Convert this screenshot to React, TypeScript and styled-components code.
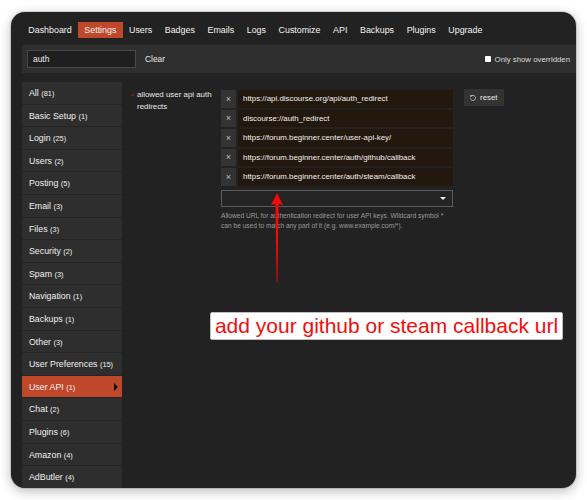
import React from "react";
import styled, { createGlobalStyle } from "styled-components";

const ORANGE = "#c0482a";

const GlobalStyle = createGlobalStyle`
  html, body {
    margin: 0;
    background: #ffffff;
  }
  body {
    font-family: "Liberation Sans", Arial, sans-serif;
  }
`;

const navItems = [
  "Dashboard",
  "Settings",
  "Users",
  "Badges",
  "Emails",
  "Logs",
  "Customize",
  "API",
  "Backups",
  "Plugins",
  "Upgrade",
];

const categories: [string, number][] = [
  ["All", 81],
  ["Basic Setup", 1],
  ["Login", 25],
  ["Users", 2],
  ["Posting", 5],
  ["Email", 3],
  ["Files", 3],
  ["Security", 2],
  ["Spam", 3],
  ["Navigation", 1],
  ["Backups", 1],
  ["Other", 3],
  ["User Preferences", 15],
  ["User API", 1],
  ["Chat", 2],
  ["Plugins", 6],
  ["Amazon", 4],
  ["AdButler", 4],
];

const redirects = [
  "https://api.discourse.org/api/auth_redirect",
  "discourse://auth_redirect",
  "https://forum.beginner.center/user-api-key/",
  "https://forum.beginner.center/auth/github/callback",
  "https://forum.beginner.center/auth/steam/callback",
];

export default function App() {
  return (
    <>
      <GlobalStyle />
      <Page>
        <Window>
          <Nav>
            {navItems.map((item) => (
              <NavItem key={item} $active={item === "Settings"}>
                {item}
              </NavItem>
            ))}
          </Nav>
          <Body>
            <SearchRow>
              <SearchInput defaultValue="auth" />
              <ClearLink>Clear</ClearLink>
              <Spacer />
              <OverriddenToggle>
                <CheckBox />
                Only show overridden
              </OverriddenToggle>
            </SearchRow>
            <Columns>
              <Sidebar>
                {categories.map(([name, count]) => (
                  <Category key={name} $active={name === "User API"}>
                    {name} <Count>({count})</Count>
                    {name === "User API" && <Caret />}
                  </Category>
                ))}
              </Sidebar>
              <Main>
                <SettingRow>
                  <SettingName>
                    <OverriddenMark />
                    allowed user api auth redirects
                  </SettingName>
                  <SettingValue>
                    <ValueList>
                      {redirects.map((url) => (
                        <ValueRow key={url}>
                          <RemoveButton>×</RemoveButton>
                          <ValueInput>{url}</ValueInput>
                        </ValueRow>
                      ))}
                    </ValueList>
                    <AddSelect>
                      <SelectCaret />
                    </AddSelect>
                    <Description>
                      Allowed URL for authentication redirect for user API keys.
                      Wildcard symbol * can be used to match any part of it
                      (e.g. www.example.com/*).
                    </Description>
                  </SettingValue>
                  <ResetButton>
                    <ResetIcon viewBox="0 0 16 16">
                      <path
                        d="M4.2 4.6A5 5 0 1 1 3 8.6"
                        fill="none"
                        stroke="#cfcfcf"
                        strokeWidth="1.6"
                      />
                      <path d="M2 2.4 L6.6 2.6 L3.3 6.4 Z" fill="#cfcfcf" />
                    </ResetIcon>
                    reset
                  </ResetButton>
                </SettingRow>
              </Main>
            </Columns>
          </Body>
        </Window>
        <Arrow viewBox="0 0 14 92">
          <polygon points="7,0 13,12 8.6,11 7.4,90 6.6,90 5.4,11 1,12" fill="#f40808" />
        </Arrow>
        <Callout>add your github or steam callback url</Callout>
      </Page>
    </>
  );
}

const Page = styled.div`
  position: relative;
  width: 587px;
  height: 500px;
  padding: 12px 11px;
  box-sizing: border-box;
`;

const Window = styled.div`
  width: 565px;
  height: 476px;
  background: #222222;
  border-radius: 14px;
  overflow: hidden;
  box-shadow: 0 0 0 1px rgba(0, 0, 0, 0.12), 0 3px 12px rgba(0, 0, 0, 0.28);
  color: #e6e6e6;
`;

const Nav = styled.nav`
  display: flex;
  height: 33px;
  box-sizing: border-box;
  padding: 10px 11px 0;
`;

const NavItem = styled.div<{ $active?: boolean }>`
  height: 16px;
  line-height: 16px;
  padding: 0 6.3px;
  font-size: 8.9px;
  color: #f2f2f2;
  background: ${(p) => (p.$active ? ORANGE : "transparent")};
`;

const Body = styled.div`
  padding-left: 11px;
`;

const SearchRow = styled.div`
  display: flex;
  align-items: center;
  height: 28px;
  padding: 0 5px;
  background: #2f2f2f;
  font-size: 8.4px;
`;

const SearchInput = styled.input`
  width: 109px;
  height: 18px;
  box-sizing: border-box;
  padding: 0 5px;
  background: #1f1f1f;
  border: 1px solid #4a4a4a;
  color: #eeeeee;
  font-family: inherit;
  font-size: 8.4px;
  outline: none;
`;

const ClearLink = styled.span`
  margin-left: 9px;
  color: #e6e6e6;
`;

const Spacer = styled.div`
  flex: 1;
`;

const OverriddenToggle = styled.label`
  display: flex;
  align-items: center;
  gap: 4px;
  color: #dddddd;
  font-size: 7.8px;
  margin-right: 1px;
`;

const CheckBox = styled.span`
  width: 6px;
  height: 6px;
  background: #ffffff;
  border-radius: 1px;
`;

const Columns = styled.div`
  display: flex;
  margin-top: 9px;
`;

const Sidebar = styled.ul`
  width: 100px;
  margin: 0;
  padding: 0;
  list-style: none;
  background: #2c2c2c;
`;

const Category = styled.li<{ $active?: boolean }>`
  position: relative;
  height: 21.6px;
  line-height: 22.6px;
  padding-left: 7px;
  font-size: 8.8px;
  color: #f0f0f0;
  background: ${(p) => (p.$active ? ORANGE : "#2e2e2e")};
  border-bottom: 1px solid #242424;
`;

const Count = styled.span`
  font-size: 7.4px;
`;

const Caret = styled.span`
  position: absolute;
  right: 4px;
  top: 7px;
  width: 0;
  height: 0;
  border-top: 4px solid transparent;
  border-bottom: 4px solid transparent;
  border-left: 4px solid #111111;
`;

const Main = styled.div`
  flex: 1;
  padding: 8px 0 0 15px;
`;

const SettingRow = styled.div`
  display: grid;
  grid-template-columns: 78px 232px auto;
  column-gap: 6px;
  align-items: start;
  justify-items: start;
`;

const SettingName = styled.div`
  position: relative;
  font-size: 7.9px;
  line-height: 12px;
  color: #e8e8e8;
  margin-top: -1px;
`;

const OverriddenMark = styled.span`
  position: absolute;
  left: -6px;
  top: 5px;
  width: 3px;
  height: 2px;
  background: #6e1d16;
`;

const SettingValue = styled.div`
  display: flex;
  flex-direction: column;
  width: 232px;
`;

const ValueList = styled.div`
  display: flex;
  flex-direction: column;
  gap: 2px;
`;

const ValueRow = styled.div`
  display: flex;
  gap: 2px;
  height: 17.5px;
`;

const RemoveButton = styled.div`
  width: 15px;
  display: flex;
  align-items: center;
  justify-content: center;
  background: #333333;
  color: #bbbbbb;
  font-size: 9px;
`;

const ValueInput = styled.div`
  flex: 1;
  display: flex;
  align-items: center;
  padding-left: 5px;
  background: #23180e;
  color: #eeeeee;
  font-size: 7.9px;
  white-space: nowrap;
`;

const AddSelect = styled.div`
  position: relative;
  height: 17px;
  margin-top: 4.5px;
  box-sizing: border-box;
  border: 1px solid #5c5c5c;
  background: #242424;
`;

const SelectCaret = styled.span`
  position: absolute;
  right: 6px;
  top: 6px;
  width: 0;
  height: 0;
  border-left: 3px solid transparent;
  border-right: 3px solid transparent;
  border-top: 3px solid #eeeeee;
`;

const Description = styled.p`
  margin: 4px 0 0;
  font-size: 6.6px;
  line-height: 10px;
  color: #9a9a9a;
`;

const ResetButton = styled.div`
  display: flex;
  align-items: center;
  gap: 3px;
  margin-left: 5px;
  margin-top: -1px;
  height: 17px;
  padding: 0 6px 0 5px;
  background: #333333;
  color: #e6e6e6;
  font-size: 7.9px;
`;

const ResetIcon = styled.svg`
  width: 8px;
  height: 8px;
`;

const Arrow = styled.svg`
  position: absolute;
  left: 270px;
  top: 193px;
  width: 14px;
  height: 92px;
`;

const Callout = styled.div`
  position: absolute;
  left: 210px;
  top: 312px;
  width: 353px;
  height: 28px;
  box-sizing: border-box;
  background: #ffffff;
  border: 1px solid #bdbdbd;
  border-radius: 2px;
  color: #f20d0d;
  font-family: "Liberation Sans", Arial, sans-serif;
  font-size: 21px;
  line-height: 26px;
  text-align: center;
  white-space: nowrap;
`;
